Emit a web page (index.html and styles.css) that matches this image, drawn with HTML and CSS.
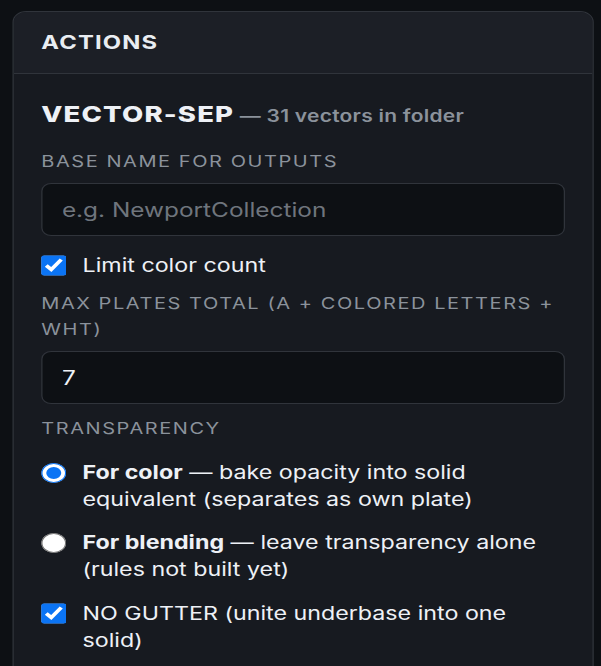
FILE: index.html
```html
<!DOCTYPE html>
<html lang="en">
<head>
<meta charset="utf-8">
<title>Actions</title>
<link rel="stylesheet" href="styles.css">
</head>
<body>
<div class="stage">
  <section class="card">
    <header class="card-head">
      <h2 class="card-title">ACTIONS</h2>
    </header>
    <div class="card-body">
      <div class="tool-title"><span class="tool-name">VECTOR-SEP</span> <span class="tool-sub">— 31 vectors in folder</span></div>

      <label class="field-label" for="base">BASE NAME FOR OUTPUTS</label>
      <input class="text-input" id="base" type="text" placeholder="e.g. NewportCollection">

      <label class="check-row first-check">
        <input type="checkbox" class="check" checked>
        <span class="row-text">Limit color count</span>
      </label>

      <label class="field-label" for="plates">MAX PLATES TOTAL (A + COLORED LETTERS + WHT)</label>
      <input class="text-input" id="plates" type="text" value="7">

      <div class="field-label section-label">TRANSPARENCY</div>

      <label class="check-row radio-row">
        <input type="radio" name="transp" class="radio" checked>
        <span class="row-text"><b>For color</b> — bake opacity into solid equivalent (separates as own plate)</span>
      </label>
      <label class="check-row radio-row">
        <input type="radio" name="transp" class="radio">
        <span class="row-text"><b>For blending</b> — leave transparency alone (rules not built yet)</span>
      </label>
      <label class="check-row radio-row">
        <input type="checkbox" class="check" checked>
        <span class="row-text">NO GUTTER (unite underbase into one solid)</span>
      </label>
    </div>
  </section>
</div>
</body>
</html>
```

FILE: styles.css
```css
html, body {
  margin: 0;
  padding: 0;
  background: #0d1014;
  overflow: hidden;
}

body {
  font-family: Inter, "Liberation Sans", sans-serif;
  color: #e6edf3;
}

.stage {
  width: 480.8px;
  padding: 11px 0 0 10px;
  box-sizing: border-box;
  transform: scaleX(1.25);
  transform-origin: 0 0;
}

.card {
  width: 463px;
  border: 1px solid #30343b;
  border-radius: 11px;
  background: #171a20;
  overflow: hidden;
  min-height: 700px;
}

.card-head {
  background: #1c1f26;
  border-bottom: 1px solid #30343b;
  padding: 19px 22px 18px;
}

.card-title {
  margin: 0;
  font-size: 19px;
  line-height: 24px;
  font-weight: 700;
  letter-spacing: 0.05em;
  color: #e9edf2;
}

.card-body {
  padding: 26px 22px 40px;
  display: flex;
  flex-direction: column;
}

.tool-title {
  line-height: 28px;
  margin-bottom: 18px;
  white-space: nowrap;
}

.tool-name {
  font-size: 22px;
  font-weight: 800;
  letter-spacing: 0.042em;
  color: #eef1f6;
}

.tool-sub {
  font-size: 16.8px;
  font-weight: 600;
  color: #8b929b;
  letter-spacing: 0.012em;
}

.field-label {
  display: block;
  font-size: 16px;
  line-height: 26px;
  letter-spacing: 0.078em;
  color: #8b929b;
  margin-bottom: 9px;
}

.section-label {
  margin-top: 11px;
  margin-bottom: 0;
}

.text-input {
  box-sizing: border-box;
  width: 100%;
  height: 53px;
  margin: 0;
  padding: 0 15.5px;
  background: #0d1014;
  border: 1px solid #30343b;
  border-radius: 8px;
  font-family: Inter, "Liberation Sans", sans-serif;
  font-size: 19.5px;
  color: #eef1f6;
  outline: none;
}

.text-input::placeholder {
  color: #6f757d;
}

.check-row {
  display: flex;
  align-items: flex-start;
  gap: 13px;
  font-size: 18.6px;
  line-height: 27px;
  color: #eef1f6;
}

.first-check {
  margin-top: 16px;
  margin-bottom: 11px;
}

.radio-row {
  margin-top: 17.5px;
}

.radio-row + .radio-row {
  margin-top: 16.5px;
}

.row-text b {
  font-weight: 700;
}

.check {
  flex: none;
  width: 20px;
  height: 21px;
  margin: 3px 0 0;
  accent-color: #0b74f4;
}

.radio {
  flex: none;
  width: 20px;
  height: 20px;
  margin: 4px 0 0;
  accent-color: #0b74f4;
}
```
